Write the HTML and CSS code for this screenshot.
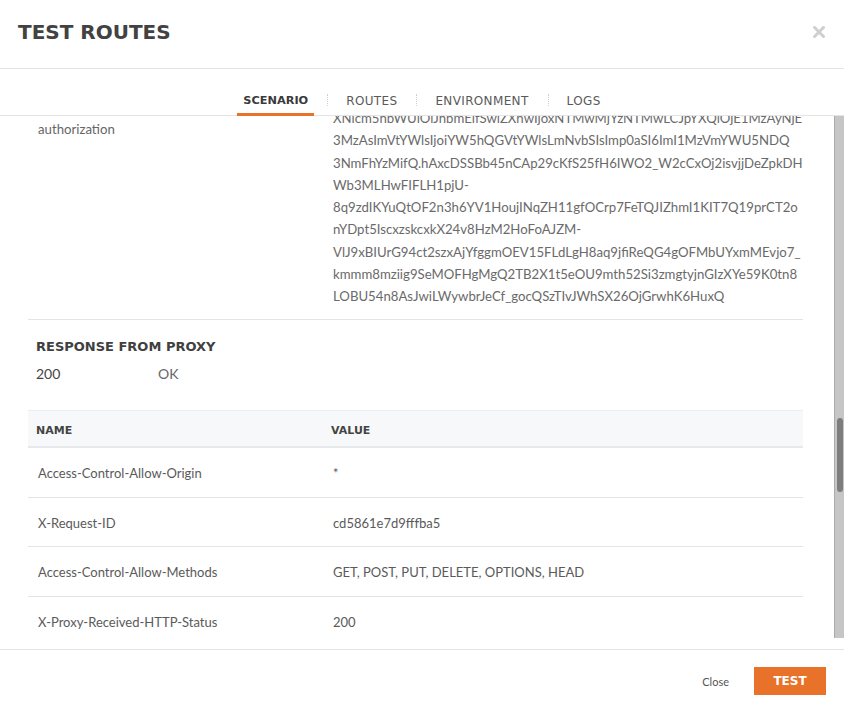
FILE: index.html
```html
<!DOCTYPE html>
<html>
<head>
<meta charset="utf-8">
<link rel="stylesheet" href="styles.css">
</head>
<body>
<div class="modal">
  <header class="modal-header">
    <h1 class="title">TEST ROUTES</h1>
    <button class="close-x" aria-label="close">
      <svg width="12" height="12" viewBox="0 0 12 12"><path d="M1.5 1.5 L10.5 10.5 M10.5 1.5 L1.5 10.5" stroke="#cfcfcf" stroke-width="3" stroke-linecap="square" fill="none"/></svg>
    </button>
  </header>
  <nav class="tabs">
    <span class="tab active">SCENARIO</span>
    <span class="sep"></span>
    <span class="tab">ROUTES</span>
    <span class="sep"></span>
    <span class="tab">ENVIRONMENT</span>
    <span class="sep"></span>
    <span class="tab">LOGS</span>
  </nav>
  <div class="scroll-area">
    <div class="viewport">
      <div class="content">
        <div class="kv-row">
          <div class="kv-label">authorization</div>
          <div class="kv-value">
            <div class="ln">XNlcm5hbWUiOiJhbmEifSwiZXhwIjoxNTMwMjYzNTMwLCJpYXQiOjE1MzAyNjE</div>
            <div class="ln">3MzAsImVtYWlsIjoiYW5hQGVtYWlsLmNvbSIsImp0aSI6ImI1MzVmYWU5NDQ</div>
            <div class="ln">3NmFhYzMifQ.hAxcDSSBb45nCAp29cKfS25fH6IWO2_W2cCxOj2isvjjDeZpkDH</div>
            <div class="ln">Wb3MLHwFIFLH1pjU-</div>
            <div class="ln">8q9zdIKYuQtOF2n3h6YV1HoujINqZH11gfOCrp7FeTQJIZhmI1KIT7Q19prCT2o</div>
            <div class="ln">nYDpt5IscxzskcxkX24v8HzM2HoFoAJZM-</div>
            <div class="ln">VlJ9xBIUrG94ct2szxAjYfggmOEV15FLdLgH8aq9jfiReQG4gOFMbUYxmMEvjo7_</div>
            <div class="ln">kmmm8mziig9SeMOFHgMgQ2TB2X1t5eOU9mth52Si3zmgtyjnGIzXYe59K0tn8</div>
            <div class="ln">LOBU54n8AsJwiLWywbrJeCf_gocQSzTIvJWhSX26OjGrwhK6HuxQ</div>
          </div>
        </div>
        <section class="response">
          <h2 class="section-title">RESPONSE FROM PROXY</h2>
          <div class="status">
            <span class="status-code">200</span>
            <span class="status-text">OK</span>
          </div>
        </section>
        <div class="table">
          <div class="thead">
            <div class="th c1">NAME</div>
            <div class="th c2">VALUE</div>
          </div>
          <div class="tr">
            <div class="td c1">Access-Control-Allow-Origin</div>
            <div class="td c2">*</div>
          </div>
          <div class="tr">
            <div class="td c1">X-Request-ID</div>
            <div class="td c2">cd5861e7d9fffba5</div>
          </div>
          <div class="tr">
            <div class="td c1">Access-Control-Allow-Methods</div>
            <div class="td c2">GET, POST, PUT, DELETE, OPTIONS, HEAD</div>
          </div>
          <div class="tr">
            <div class="td c1">X-Proxy-Received-HTTP-Status</div>
            <div class="td c2">200</div>
          </div>
        </div>
      </div>
    </div>
    <div class="scrollbar"><div class="thumb"></div></div>
  </div>
  <footer class="modal-footer">
    <button class="btn-close">Close</button>
    <button class="btn-test">TEST</button>
  </footer>
</div>
</body>
</html>
```

FILE: styles.css
```css
* { box-sizing: border-box; }
html, body { margin: 0; padding: 0; background: #fff; }
body { font-family: Lato, "Liberation Sans", sans-serif; color: #666; }

.modal { width: 844px; height: 710px; display: flex; flex-direction: column; overflow: hidden; }

.modal-header {
  height: 69px;
  border-bottom: 1px solid #e4e4e4;
  display: flex;
  align-items: center;
  justify-content: space-between;
  padding: 0 19px 4px 18px;
}
.title {
  margin: 0;
  font-family: "DejaVu Sans", sans-serif;
  font-weight: bold;
  font-size: 20px;
  color: #424242;
  letter-spacing: 0;
}
.close-x { border: 0; background: none; padding: 0; width: 12px; height: 12px; display: flex; }

.tabs {
  height: 47px;
  border-bottom: 1px solid #e4e4e4;
  display: flex;
  justify-content: center;
  align-items: flex-end;
}
.tab {
  font-family: "DejaVu Sans", sans-serif;
  font-size: 12px;
  letter-spacing: 0.35px;
  line-height: 22px;
  color: #5a5a5a;
  padding: 1px 6px 1px;
  border-bottom: 3px solid transparent;
  margin-bottom: -1px;
}
.tab.active {
  font-weight: bold;
  font-size: 11.3px;
  letter-spacing: 0;
  color: #3a3a3a;
  border-bottom-color: #e8722a;
}
.sep {
  width: 0;
  height: 12px;
  border-left: 1px dotted #cfcfcf;
  margin: 0 12px 9px 13px;
  align-self: flex-end;
}

.scroll-area { height: 524px; display: flex; }
.viewport { flex: 1; min-width: 0; overflow: hidden; padding: 0 31px 0 28px; }
.content { margin-top: -9px; }

.scrollbar {
  width: 10px;
  flex: none;
  height: 522px;
  background: #c6c6c6;
  border-left: 1px solid #ababab;
  padding: 302px 1px 0 2px;
}
.thumb { height: 74px; background: #7d7d7d; border-radius: 3px; }

.kv-row {
  display: flex;
  border-bottom: 1px solid #e4e4e4;
  padding-bottom: 12px;
}
.kv-label { width: 305px; flex: none; padding: 11px 0 0 10px; font-size: 13.2px; line-height: 22px; color: #666; }
.kv-value { flex: 1; min-width: 0; font-size: 13.2px; line-height: 22.25px; color: #6a6a6a; }
.ln { white-space: nowrap; }

.response { padding: 18px 0 0 8px; }
.section-title {
  margin: 0;
  font-family: "DejaVu Sans", sans-serif;
  font-weight: bold;
  font-size: 13px;
  line-height: 18px;
  color: #404040;
}
.status { display: flex; font-size: 14px; line-height: 20px; margin-top: 8px; }
.status-code { width: 122px; color: #444; }
.status-text { color: #666; }

.table { margin-top: 26px; }
.thead {
  display: flex;
  height: 38px;
  align-items: center;
  background: #f7f8fa;
  border-top: 1px solid #eceef1;
  border-bottom: 2px solid #e6e8eb;
  padding-top: 3px;
}
.th {
  font-family: "DejaVu Sans", sans-serif;
  font-weight: bold;
  font-size: 11px;
  color: #444;
  padding-left: 8px;
}
.c1 { width: 295px; flex: none; }
.c2 { flex: 1; }
.tr {
  display: flex;
  height: 49.5px;
  align-items: center;
  border-bottom: 1px solid #e4e4e4;
}
.td { font-size: 13px; color: #5a5a5a; padding-left: 10px; padding-top: 1px; }

.modal-footer {
  margin-top: 9px;
  border-top: 1px solid #e4e4e4;
  flex: 1;
  display: flex;
  justify-content: flex-end;
  align-items: center;
  padding: 2px 18px 0 0;
}
.btn-close {
  border: 0;
  background: none;
  font-family: Lato, sans-serif;
  font-size: 11px;
  color: #555;
  padding: 0;
  margin-right: 25px;
}
.btn-test {
  width: 72px;
  height: 28px;
  border: 0;
  background: #e8722a;
  color: #fff;
  font-family: "DejaVu Sans", sans-serif;
  font-weight: bold;
  font-size: 12px;
  padding: 0;
}
```
